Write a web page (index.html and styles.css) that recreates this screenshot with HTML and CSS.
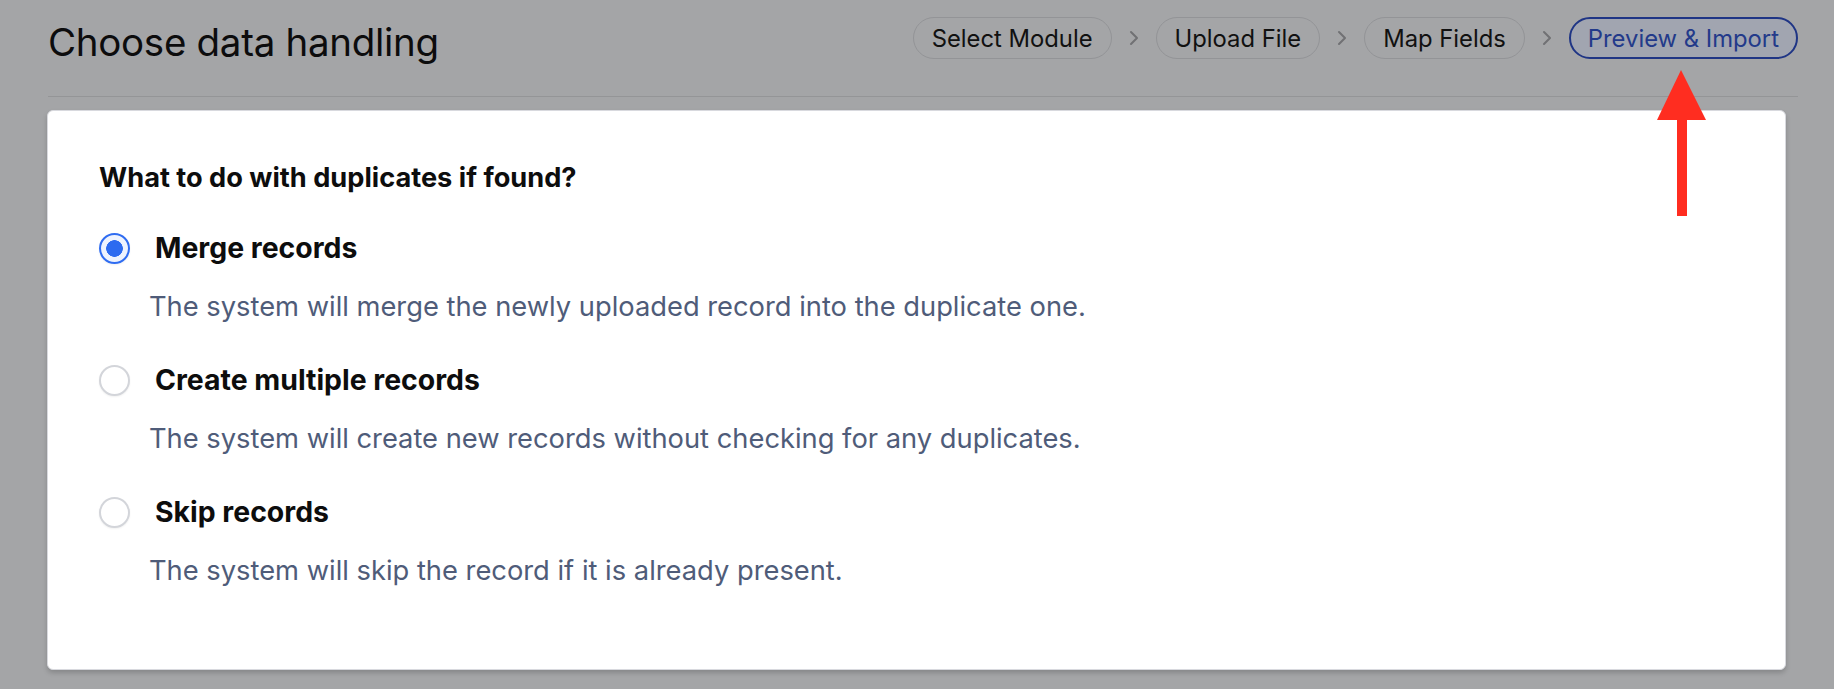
FILE: index.html
```html
<!DOCTYPE html>
<html lang="en">
<head>
<meta charset="utf-8">
<title>Choose data handling</title>
<link rel="stylesheet" href="styles.css">
</head>
<body>
<div class="page">
  <header class="header">
    <h1 class="title">Choose data handling</h1>
    <nav class="steps">
      <span class="pill">Select Module</span>
      <span class="chev"><svg width="10" height="16" viewBox="0 0 10 16"><path d="M2 2l6 6-6 6" fill="none" stroke="currentColor" stroke-width="2" stroke-linecap="round" stroke-linejoin="round"/></svg></span>
      <span class="pill">Upload File</span>
      <span class="chev"><svg width="10" height="16" viewBox="0 0 10 16"><path d="M2 2l6 6-6 6" fill="none" stroke="currentColor" stroke-width="2" stroke-linecap="round" stroke-linejoin="round"/></svg></span>
      <span class="pill">Map Fields</span>
      <span class="chev"><svg width="10" height="16" viewBox="0 0 10 16"><path d="M2 2l6 6-6 6" fill="none" stroke="currentColor" stroke-width="2" stroke-linecap="round" stroke-linejoin="round"/></svg></span>
      <span class="pill active">Preview &amp; Import</span>
    </nav>
  </header>
  <div class="divider"></div>
  <section class="card">
    <h2 class="question">What to do with duplicates if found?</h2>
    <div class="options">
      <div class="option">
        <div class="option-row">
          <span class="radio checked"></span>
          <span class="label">Merge records</span>
        </div>
        <p class="desc">The system will merge the newly uploaded record into the duplicate one.</p>
      </div>
      <div class="option">
        <div class="option-row">
          <span class="radio"></span>
          <span class="label">Create multiple records</span>
        </div>
        <p class="desc">The system will create new records without checking for any duplicates.</p>
      </div>
      <div class="option">
        <div class="option-row">
          <span class="radio"></span>
          <span class="label">Skip records</span>
        </div>
        <p class="desc">The system will skip the record if it is already present.</p>
      </div>
    </div>
  </section>
</div>
<svg class="arrow" width="56" height="152" viewBox="0 0 56 152">
  <polygon points="26,2 2,52 51,52" fill="#ff2d20"/>
  <rect x="22" y="48" width="10" height="100" fill="#ff2d20"/>
</svg>
</body>
</html>
```
FILE: styles.css
```css
html, body {
  margin: 0;
  padding: 0;
}
body {
  background: #a4a5a7;
  font-family: Inter, "Noto Sans", "Liberation Sans", sans-serif;
  color: #0c0c0d;
  height: 689px;
  overflow: hidden;
  position: relative;
}
.page {
  padding: 0 36px 0 48px;
}
.header {
  display: flex;
  justify-content: space-between;
  align-items: center;
  height: 96px;
}
.title {
  margin: 0;
  font-size: 38.5px;
  font-weight: 400;
  letter-spacing: -0.3px;
  line-height: 46px;
  margin-top: -12px;
}
.steps {
  display: flex;
  align-items: center;
  gap: 17px;
  margin-top: -20px;
}
.pill {
  display: flex;
  align-items: center;
  height: 40px;
  padding: 0 18px;
  border: 1px solid #939497;
  border-radius: 22px;
  font-size: 23.8px;
  color: #111;
}
.pill.active {
  border: 2px solid #1f3585;
  color: #233a8a;
  background: #a1a5b0;
  padding: 0 17px;
  height: 38px;
}
.chev {
  display: flex;
  color: #707174;
}
.divider {
  height: 1px;
  background: #949597;
}
.card {
  margin: 13px 12px 0 -1px;
  background: #fff;
  border: 1px solid #d8d9de;
  border-radius: 6px;
  box-shadow: 0 3px 5px rgba(0, 0, 0, 0.18);
  padding: 51px 51px 84px;
  height: 423px;
}
.question {
  margin: 0;
  font-size: 27.2px;
  font-weight: 700;
  line-height: 32px;
  color: #0d0d0d;
}
.options {
  display: flex;
  flex-direction: column;
  gap: 41px;
  margin-top: 38px;
}
.option {
  display: flex;
  flex-direction: column;
  gap: 27px;
}
.option-row {
  display: flex;
  align-items: center;
  gap: 25px;
  height: 32px;
}
.radio {
  width: 27px;
  height: 27px;
  border: 2px solid #d3d5da;
  border-radius: 50%;
  background: #fff;
  box-sizing: content-box;
  flex: none;
  box-shadow: 0 1px 2px rgba(0, 0, 0, 0.06);
}
.radio.checked {
  border-color: #2f6cf1;
  background: radial-gradient(circle, #2d6bf0 0 8px, #eef3fe 8.6px);
}
.label {
  font-size: 28.4px;
  font-weight: 700;
  line-height: 32px;
  color: #0d0d0d;
}
.desc {
  margin: 0 0 0 50px;
  font-size: 27.3px;
  line-height: 32px;
  color: #4f5c79;
}
.arrow {
  position: absolute;
  left: 1655px;
  top: 68px;
}
```
